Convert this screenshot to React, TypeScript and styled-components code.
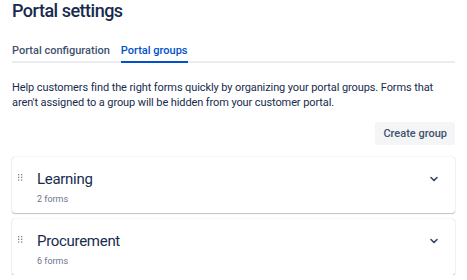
import React from "react";
import styled, { createGlobalStyle } from "styled-components";

const Global = createGlobalStyle`
  html, body { margin: 0; padding: 0; background: #fff; }
  body { font-family: Roboto, "Noto Sans", sans-serif; color: #172B4D; }
`;

const Page = styled.div`
  padding: 0 12px;
  display: flex;
  flex-direction: column;
`;

const Title = styled.h1`
  margin: 0;
  font-size: 18px;
  line-height: 22px;
  font-weight: 500;
  letter-spacing: -0.5px;
  color: #172B4D;
`;

const Tabs = styled.div`
  margin-top: 22px;
  display: flex;
  gap: 11px;
  border-bottom: 2px solid #EBECF0;
`;

const Tab = styled.div<{ $active?: boolean }>`
  font-size: 11px;
  line-height: 14px;
  font-weight: 500;
  padding-bottom: 3px;
  margin-bottom: -2px;
  color: ${(p) => (p.$active ? "#0052CC" : "#42526E")};
  border-bottom: 2px solid ${(p) => (p.$active ? "#0052CC" : "transparent")};
`;

const Desc = styled.p`
  margin: 17px 0 0;
  font-size: 11px;
  line-height: 15px;
  letter-spacing: -0.1px;
  color: #172B4D;
`;

const Actions = styled.div`
  display: flex;
  justify-content: flex-end;
  margin-top: 12px;
`;

const Button = styled.button`
  font-family: inherit;
  font-size: 11px;
  font-weight: 500;
  color: #42526E;
  background: #F4F5F7;
  border: none;
  border-radius: 3px;
  height: 23px;
  padding: 0 8px;
`;

const List = styled.div`
  margin-top: 12px;
  display: flex;
  flex-direction: column;
  gap: 6px;
`;

const Card = styled.div`
  background: #fff;
  border-radius: 3px;
  box-shadow: 0 1px 1px rgba(9, 30, 66, 0.25), 0 0 1px rgba(9, 30, 66, 0.31);
  height: 56px;
  display: flex;
  align-items: flex-start;
  padding: 13px 16px 0 6px;
  box-sizing: border-box;
`;

const Handle = styled.div`
  width: 19px;
  display: flex;
  padding-top: 4px;
`;

const Body = styled.div`
  flex: 1;
  display: flex;
  flex-direction: column;
`;

const Name = styled.div`
  font-size: 15px;
  line-height: 18px;
  letter-spacing: -0.3px;
  color: #172B4D;
`;

const Count = styled.div`
  margin-top: 5px;
  font-size: 9px;
  line-height: 12px;
  color: #6B778C;
`;

const Chevron = styled.div`
  padding-top: 4px;
  display: flex;
`;

const Dots = () => (
  <svg width="5" height="7" viewBox="0 0 5 7">
    {[0, 2.7, 5.4].map((y) =>
      [0, 3].map((x) => (
        <rect key={`${x}-${y}`} x={x} y={y} width="1.3" height="1.3" fill="#7A869A" />
      ))
    )}
  </svg>
);

const Down = () => (
  <svg width="10" height="10" viewBox="0 0 10 10">
    <path d="M2 3.5 L5 6.5 L8 3.5" stroke="#344563" strokeWidth="1.6" fill="none" strokeLinecap="round" strokeLinejoin="round" />
  </svg>
);

const groups = [
  { name: "Learning", count: 2 },
  { name: "Procurement", count: 6 },
];

export default function App() {
  return (
    <>
      <Global />
      <Page>
        <Title>Portal settings</Title>
        <Tabs>
          <Tab>Portal configuration</Tab>
          <Tab $active>Portal groups</Tab>
        </Tabs>
        <Desc>
          Help customers find the right forms quickly by organizing your portal groups. Forms that
          aren't assigned to a group will be hidden from your customer portal.
        </Desc>
        <Actions>
          <Button>Create group</Button>
        </Actions>
        <List>
          {groups.map((g) => (
            <Card key={g.name}>
              <Handle>
                <Dots />
              </Handle>
              <Body>
                <Name>{g.name}</Name>
                <Count>{g.count} forms</Count>
              </Body>
              <Chevron>
                <Down />
              </Chevron>
            </Card>
          ))}
        </List>
      </Page>
    </>
  );
}
